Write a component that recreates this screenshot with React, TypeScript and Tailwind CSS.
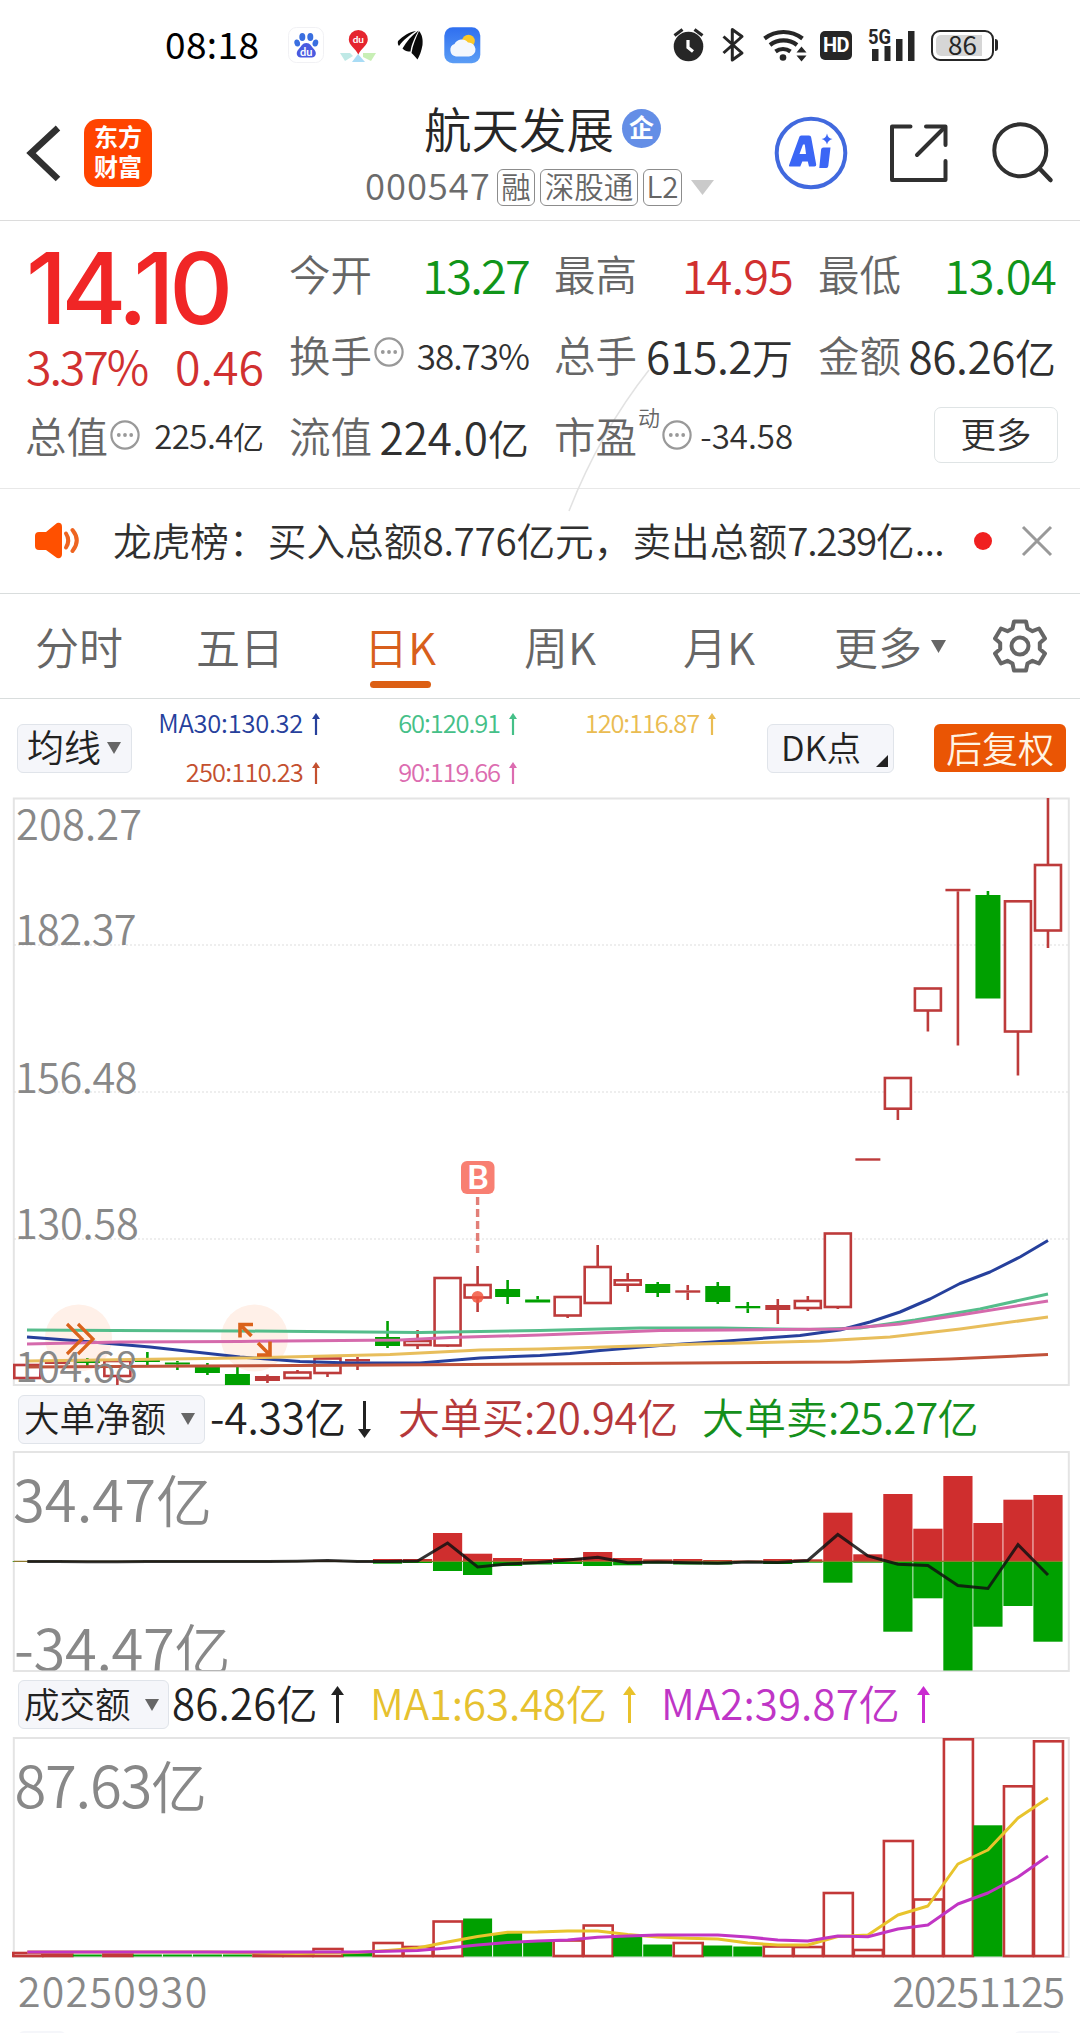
import React from "react";

const px = (i: number) => 27.3 + 30.02 * i;

const RED = "#bd3b3b";
const GREEN = "#00a000";

type Candle = { k: "h" | "r" | "g"; t: number; b: number; hi?: number; lo?: number };

const candles: Candle[] = [
  { k: "h", t: 1365, b: 1378 },
  { k: "r", t: 1361, b: 1364 },
  { k: "g", t: 1361, b: 1363, hi: 1358, lo: 1366 },
  { k: "h", t: 1361, b: 1376, lo: 1385 },
  { k: "g", t: 1360, b: 1362, hi: 1352, lo: 1365 },
  { k: "g", t: 1362.5, b: 1364.5, hi: 1361, lo: 1370 },
  { k: "g", t: 1365, b: 1373, hi: 1363, lo: 1375 },
  { k: "g", t: 1374, b: 1385, hi: 1366 },
  { k: "r", t: 1376, b: 1381, hi: 1374.5, lo: 1383 },
  { k: "h", t: 1372.5, b: 1378, hi: 1370 },
  { k: "h", t: 1358.5, b: 1373, lo: 1377 },
  { k: "r", t: 1359, b: 1361.5, hi: 1357, lo: 1370 },
  { k: "g", t: 1337, b: 1346, hi: 1321, lo: 1348 },
  { k: "h", t: 1341, b: 1345, hi: 1330, lo: 1349 },
  { k: "h", t: 1278, b: 1345.5, lo: 1347 },
  { k: "h", t: 1285, b: 1297.5, hi: 1266, lo: 1312 },
  { k: "g", t: 1289, b: 1297, hi: 1280, lo: 1304 },
  { k: "g", t: 1299.5, b: 1302.5, hi: 1296 },
  { k: "h", t: 1297, b: 1315.5, lo: 1318 },
  { k: "h", t: 1267, b: 1303, hi: 1245 },
  { k: "h", t: 1280.3, b: 1284.7, hi: 1273, lo: 1292 },
  { k: "g", t: 1284, b: 1293, hi: 1282, lo: 1297 },
  { k: "r", t: 1290.3, b: 1292.7, hi: 1285, lo: 1300 },
  { k: "g", t: 1286, b: 1302, hi: 1282, lo: 1304 },
  { k: "g", t: 1306, b: 1308.3, hi: 1302, lo: 1313 },
  { k: "r", t: 1305, b: 1310, hi: 1299, lo: 1324 },
  { k: "h", t: 1301, b: 1308, hi: 1296, lo: 1311 },
  { k: "h", t: 1233.5, b: 1307, lo: 1309 },
  { k: "r", t: 1158.3, b: 1160.7 },
  { k: "h", t: 1078, b: 1108.7, lo: 1120 },
  { k: "h", t: 988.5, b: 1010.5, lo: 1031.5 },
  { k: "r", t: 888.8, b: 891.3, lo: 1045.5 },
  { k: "g", t: 895, b: 998.5, hi: 891 },
  { k: "h", t: 901.3, b: 1031.5, lo: 1075.5 },
  { k: "h", t: 865, b: 930.5, hi: 798, lo: 948 },
];

const flows: [number, number][] = [
  [1561, 1562], [1561, 1562], [1561, 1562], [1561, 1562], [1561, 1562], [1561, 1562],
  [1561, 1562], [1561, 1562], [1561, 1562], [1561, 1562], [1560.5, 1562], [1561, 1562],
  [1559, 1563.7], [1559, 1563], [1533, 1571], [1553.7, 1575], [1558, 1566], [1559, 1564.5],
  [1558, 1564], [1552, 1566], [1558, 1565.3], [1559.3, 1563.5], [1559, 1564.5], [1560, 1564.5],
  [1560.5, 1562.7], [1559, 1564], [1559.3, 1562.7], [1512.7, 1582.7], [1554.3, 1562.7],
  [1494, 1631.7], [1528.7, 1598.3], [1476, 1670.5], [1523, 1626.7], [1499.7, 1606], [1495, 1641.7],
];

const flowLine = [
  1561.4, 1561.4, 1561.7, 1561.7, 1561.5, 1561.5, 1561.5, 1561.5, 1561.5, 1561.2, 1560.5, 1561.5,
  1561.5, 1561, 1543, 1567, 1564, 1562.5, 1560, 1557.3, 1562.7, 1562, 1562.7, 1563.2, 1562, 1562.5,
  1560.5, 1534.5, 1556, 1564.3, 1565.5, 1585.5, 1588.5, 1544.7, 1575,
];

const volumes: ["h" | "g", number][] = [
  ["h", 1953], ["h", 1954], ["g", 1954.5], ["h", 1954], ["g", 1954.5], ["g", 1954.5], ["g", 1954.5],
  ["g", 1954.5], ["h", 1955], ["h", 1955], ["h", 1949], ["g", 1953], ["h", 1943], ["h", 1947],
  ["h", 1921.5], ["g", 1918.5], ["g", 1933], ["g", 1942], ["h", 1940.5], ["h", 1925.5], ["g", 1937],
  ["g", 1944.5], ["h", 1943], ["g", 1945.5], ["g", 1946.5], ["h", 1946.5], ["h", 1947], ["h", 1893],
  ["h", 1950], ["h", 1841], ["h", 1899.5], ["h", 1739.3], ["g", 1825.3], ["h", 1786.3], ["h", 1741.3],
];

const volMa1 = [
  1952, 1952, 1952, 1952, 1952, 1952, 1952, 1952.5, 1953, 1953.5, 1953, 1952.5, 1950.5, 1948, 1942,
  1936.5, 1932.3, 1932, 1931, 1931, 1934.5, 1937, 1938.3, 1939, 1943, 1945, 1945, 1936.5, 1935, 1915,
  1906, 1864, 1850, 1818, 1798,
];
const volMa2 = [
  1952, 1952, 1952, 1952, 1952, 1952, 1952, 1952, 1952, 1952, 1952, 1952, 1951.3, 1950.5, 1948, 1945,
  1942.5, 1941, 1940, 1937.3, 1936, 1935, 1935, 1935, 1937, 1940, 1941, 1936, 1936.7, 1929, 1925, 1904,
  1893, 1877, 1856,
];

const maLines: { color: string; pts: string }[] = [
  { color: "#55bd8b", pts: "27,1330 115,1330.5 240,1331 420,1332.5 540,1330.5 640,1328 720,1328 810,1329.5 860,1328 915,1320 980,1309 1048,1294" },
  { color: "#26409c", pts: "27,1337 80,1341 150,1347 240,1357 300,1361.5 350,1363 420,1363 480,1358 540,1355.5 570,1353.5 600,1350.5 660,1345.5 720,1341.5 800,1335.5 840,1330 870,1322 900,1312 930,1299 960,1283.5 990,1272 1020,1257 1048,1240.5" },
  { color: "#d56aac", pts: "27,1344 120,1342 240,1341.5 400,1340 450,1337.5 540,1335 660,1330.5 780,1329.5 840,1329 900,1324 960,1315 1048,1301" },
  { color: "#e8be5c", pts: "27,1361 240,1358 390,1354.5 480,1350 540,1349 700,1344 820,1341 890,1337 960,1329 1048,1317" },
  { color: "#c0523a", pts: "27,1367 200,1366 540,1364 850,1362 950,1359 1048,1354.5" },
];

const toPts = (ys: number[]) => ys.map((y, i) => `${px(i).toFixed(1)},${y}`).join(" ");

/* ---------- small glyphs ---------- */

const Dots = () => (
  <svg className="shrink-0" width="30" height="30" viewBox="0 0 30 30">
    <circle cx="15" cy="15" r="13.6" fill="none" stroke="#999" strokeWidth="2.2" />
    <circle cx="8.8" cy="15" r="1.9" fill="#999" />
    <circle cx="15" cy="15" r="1.9" fill="#999" />
    <circle cx="21.2" cy="15" r="1.9" fill="#999" />
  </svg>
);

const Down = ({ w = 14, h = 12, c = "#666" }: { w?: number; h?: number; c?: string }) => (
  <svg className="shrink-0" width={w} height={h} viewBox="0 0 14 12" preserveAspectRatio="none">
    <path d="M0 0H14L7 12Z" fill={c} />
  </svg>
);

const SmallArrow = ({ c }: { c: string }) => (
  <svg className="shrink-0" width="8" height="22" viewBox="0 0 8 22">
    <path d="M4 22V2" stroke={c} strokeWidth="2.2" />
    <path d="M0 6L4 0L8 6Z" fill={c} />
  </svg>
);

const BigArrow = ({ c, down = false }: { c: string; down?: boolean }) => (
  <svg className={down ? "shrink-0 rotate-180" : "shrink-0"} width="13" height="37" viewBox="0 0 13 37">
    <path d="M6.5 37V4" stroke={c} strokeWidth="3" />
    <path d="M0 9L6.5 0L13 9Z" fill={c} />
  </svg>
);

/* ---------- status bar ---------- */

const StatusBar = () => (
  <div className="flex h-[90px] items-center pl-[165px]">
    <span className="w-[123px] pb-[4px] text-[37px] leading-none font-normal tracking-[0.400px] text-black">08:18</span>
    <svg width="36" height="36" viewBox="288 27 36 36">
      <rect x="288.5" y="27.5" width="35" height="35" rx="8" fill="#fff" stroke="#f1f1f4" />
      <g fill="#3a6fe0">
        <ellipse cx="302.3" cy="37" rx="3" ry="3.9" />
        <ellipse cx="310.3" cy="37" rx="3" ry="3.9" />
        <ellipse cx="297.2" cy="43" rx="2.8" ry="3.6" transform="rotate(-15 297.2 43)" />
        <ellipse cx="315.4" cy="43" rx="2.8" ry="3.6" transform="rotate(15 315.4 43)" />
      </g>
      <path d="M306.3 43c4 0 5 3.500 7.500 6 4 4 1.500 9-2.500 8.500h-10c-4 .5-6.500-4.500-2.500-8.500 2.500-2.500 3.500-6 7.500-6z" fill="#4a5be0" />
      <text x="306.3" y="56" textAnchor="middle" fontSize="11" fontWeight="700" fill="#fff" fontFamily="Lato">du</text>
    </svg>
    <svg className="ml-[16px]" width="36" height="36" viewBox="340 28 36 36">
      <path d="M340 54h10l3 3-8 5z" fill="#bfe9e6" />
      <path d="M352 63l6-8 7 8z" fill="#a9dcf5" />
      <path d="M363 54h13l-5 8-8-4z" fill="#c8efb5" />
      <path d="M358.300 31a9.500 9.500 0 0 1 9.500 9.600c0 6-7 9-9.500 15-2.500-6-9.500-9-9.500-15a9.500 9.500 0 0 1 9.500-9.600z" fill="#e5252f" />
      <text x="358.300" y="44" textAnchor="middle" fontSize="10" fontWeight="700" fill="#fff" fontFamily="Lato">du</text>
    </svg>
    <svg className="ml-[21px]" width="27" height="32" viewBox="397 29 27 32">
      <path d="M398 41c5-5 11-9 18-10-6 4-12 8-17 15-1-1-1.500-3-1-5z" fill="#0a0a0a" />
      <path d="M402.500 48.500c4-7 9-13 16-18-3.500 7-7 13-8 21-3 0-6-.5-8-3z" fill="#0a0a0a" />
      <path d="M411.500 53c1-8 4.500-15 7.500-22 3.500 4 4 9 3.500 14-1 6-3 11-5 14.500-1.500-2-4-4.500-6-6.500z" fill="#0a0a0a" />
    </svg>
    <svg className="ml-[20px]" width="37" height="37" viewBox="444 26.500 37 37">
      <defs>
        <linearGradient id="sky" x1="0" y1="0" x2="0" y2="1">
          <stop offset="0" stopColor="#2f6ff0" />
          <stop offset="1" stopColor="#5b9df5" />
        </linearGradient>
      </defs>
      <rect x="444.300" y="26.800" width="36" height="36" rx="8.500" fill="url(#sky)" />
      <circle cx="468.500" cy="40.500" r="6.300" fill="#fcc829" />
      <path d="M456 56a6.500 6.500 0 0 1-1.500-12.500 8 8 0 0 1 13.500-1.500 7 7 0 0 1 1 14z" fill="#f4f7fd" />
    </svg>
    <svg className="ml-[191px]" width="34" height="36" viewBox="672 27 34 36">
      <circle cx="688.500" cy="46.500" r="14.800" fill="#262626" />
      <path d="M674.500 35.500l8-6M702.500 35.500l-8-6" stroke="#262626" strokeWidth="3.200" />
      <path d="M688 40v7.500l5 4" stroke="#fff" strokeWidth="3.200" fill="none" />
    </svg>
    <svg className="ml-[15px]" width="24" height="36" viewBox="721 27 24 36">
      <path d="M723.500 36.500L742 53l-9.700 7V29.500l9.700 7L723.500 53" fill="none" stroke="#262626" strokeWidth="3" strokeLinejoin="round" />
    </svg>
    <svg className="ml-[17px]" width="46" height="36" viewBox="762 26 46 36">
      <g fill="none" stroke="#262626" strokeWidth="4.200">
        <path d="M764.500 37.500a31 31 0 0 1 38 0" />
        <path d="M770 44a22 22 0 0 1 27 0" />
        <path d="M775.500 50.500a13 13 0 0 1 15 0" />
      </g>
      <circle cx="783" cy="56.500" r="3.300" fill="#262626" />
      <path d="M796.500 51.500l5-6 5 6zM796.500 54.500l5 6 5-6z" fill="#262626" />
    </svg>
    <span className="ml-[12px] flex h-[29px] w-[32px] items-center justify-center rounded-[5px] bg-[#262626] font-[Roboto] text-[20px] leading-none font-bold tracking-tight text-white">HD</span>
    <svg className="ml-[15px]" width="48" height="36" viewBox="867 26 48 36">
      <text x="868" y="43" fontSize="20" fontWeight="700" fill="#262626" fontFamily="Roboto" textLength="23" lengthAdjust="spacingAndGlyphs">5G</text>
      <path d="M872 48h6.500v12h-6.500zM884.500 45h6v15h-6zM896 38h6.500v22h-6.500zM908 30h6.500v30h-6.500z" fill="#262626" />
    </svg>
    <div className="relative ml-[16px] flex h-[31px] w-[63px] rounded-[9px] border-2 border-[#262626] p-[3px]">
      <div className="h-full w-[46px] rounded-l-[5px] bg-[#d6d6d6]" />
      <span className="absolute inset-0 flex items-center justify-center pb-[3px] text-[26px] leading-none font-normal text-[#262626]">86</span>
    </div>
    <div className="ml-[1px] h-[12px] w-[3px] rounded-r bg-[#262626]" />
  </div>
);

/* ---------- header ---------- */

const Tag = ({ children, w }: { children: React.ReactNode; w: string }) => (
  <span className={`${w} flex h-[37px] items-center justify-center rounded-[6px] border-[1.5px] border-[#8c8c8c] pb-[2px] text-[29.5px] leading-none whitespace-nowrap text-[#666]`}>
    {children}
  </span>
);

const Header = () => (
  <header className="flex h-[131px] border-b border-[#dcdcdc] pl-[26px]">
    <svg className="mt-[32px]" width="38" height="62" viewBox="26 122 38 62">
      <path d="M58 128L31 153L58 179" fill="none" stroke="#303030" strokeWidth="6.500" />
    </svg>
    <div className="mt-[29px] ml-[20px] flex h-[68px] w-[68px] flex-col items-center justify-center gap-[4px] rounded-[14px] bg-[#ff4400] pb-[4px] text-[24px] leading-[26px] font-bold text-white">
      <span>东方</span>
      <span>财富</span>
    </div>
    <div className="ml-[213px] w-[350px]">
      <div className="flex h-[76px] items-center pl-[59px]">
        <span className="text-[47.500px] leading-none text-[#262626]">航天发展</span>
        <span className="ml-[8px] flex size-[39px] items-center justify-center rounded-full bg-[#648ee6] pb-[3px] text-[25px] leading-none font-bold text-white">企</span>
      </div>
      <div className="flex h-[42px] items-center">
        <span className="w-[132px] pb-[3px] text-[36.500px] leading-none tracking-[0.900px] text-[#6b6b6b]">000547</span>
        <div className="flex gap-[5px]">
          <Tag w="w-[38px]">融</Tag>
          <Tag w="w-[98px]">深股通</Tag>
          <Tag w="w-[39px]">L2</Tag>
        </div>
        <div className="pl-[9px]">
          <Down w={23} h={15} c="#cacaca" />
        </div>
      </div>
    </div>
    <svg className="mt-[25px] ml-[58px]" width="76" height="76" viewBox="772 115 76 76">
      <circle cx="810" cy="153" r="34.300" fill="#fff" stroke="#4169de" strokeWidth="4" />
      <path fillRule="evenodd" d="M798.500 136.500q.8-1 2-1h7.500q2 0 2.200 2l5 27q.2 2-1.700 2h-5.500l-1.200-5h-5.500l-2 5h-10q-2 0-1-2zM802 144.500l-3.500 9.500h6.500l-1.200-9.500z" fill="#3b66f5" />
      <path d="M822.500 147.500h7l-2.200 18.500q-.2 2-2 2h-7l1.800-18.500q.3-2 2.400-2z" fill="#3b66f5" />
      <path d="M826 133.500q1 5 5.500 5.500-4.500 1-5.500 5.500-1-4.500-5.500-5.500 4.500-.5 5.500-5.500z" fill="#3b66f5" />
    </svg>
    <svg className="mt-[30px] ml-[36px]" width="66" height="66" viewBox="885 120 66 66">
      <g fill="none" stroke="#303030" strokeWidth="4" strokeLinecap="round" strokeLinejoin="round">
        <path d="M910.500 126.500H892V180h53.500v-19" />
        <path d="M926 126.500h19.500V145" />
        <path d="M944 128L917 155" />
      </g>
    </svg>
    <svg className="mt-[28px] ml-[38px]" width="68" height="68" viewBox="989 118 68 68">
      <circle cx="1020.300" cy="150.300" r="26" fill="none" stroke="#303030" strokeWidth="4" />
      <path d="M1040 169l10.500 11" stroke="#303030" strokeWidth="4.500" strokeLinecap="round" />
    </svg>
  </header>
);

/* ---------- quote ---------- */

const Label = ({ children }: { children: React.ReactNode }) => (
  <span className="-ml-px text-[41.500px] leading-none whitespace-nowrap text-[#666]">{children}</span>
);

const Big = ({ n, u, track }: { n: string; u: string; track: string }) => (
  <span className={`${track} text-[44px] leading-none whitespace-nowrap text-[#303030]`}>
    {n}
    <span className="text-[41px] tracking-normal">{u}</span>
  </span>
);

const Quote = () => (
  <section className="relative h-[268px] border-b border-[#e8e8e8]">
    <svg className="absolute top-0 left-0" width="1080" height="300" viewBox="0 221 1080 300">
      <path d="M649 370Q600 432 569 511" fill="none" stroke="#e2e2e2" strokeWidth="1.500" />
    </svg>
    <div className="relative grid grid-cols-[238px_239px_238px_237px] grid-rows-[81px_81px_81px] gap-x-[26px] pt-[12px] pl-[26px]">
      <div className="row-span-2 flex flex-col">
        <span className="h-[108px] pt-[6px] font-[Inter] text-[99px] leading-none font-medium tracking-[-5.500px] text-[#f02626]">14.10</span>
        <div className="flex justify-between pt-[1px] text-[46.500px] leading-none text-[#d13030]">
          <span className="tracking-[-2.100px]">3.37%</span>
          <span>0.46</span>
        </div>
      </div>
      <div className="flex items-center justify-between">
        <Label>今开</Label>
        <span className="text-[47px] leading-none tracking-[-1.800px]  text-[#10951a]">13.27</span>
      </div>
      <div className="flex items-center justify-between">
        <Label>最高</Label>
        <span className="text-[47px] leading-none tracking-[-0.900px] text-[#d13030]">14.95</span>
      </div>
      <div className="flex items-center justify-between">
        <Label>最低</Label>
        <span className="text-[47px] leading-none tracking-[-0.700px] text-[#10951a]">13.04</span>
      </div>
      <div className="flex items-center">
        <Label>换手</Label>
        <div className="ml-[2px] pb-[5px]"><Dots /></div>
        <span className="ml-auto text-[35px] leading-none tracking-[-1px] text-[#303030]">38.73%</span>
      </div>
      <div className="flex items-center justify-between">
        <Label>总手</Label>
        <Big n="615.2" u="万" track="tracking-[-0.500px]" />
      </div>
      <div className="flex items-center justify-between">
        <Label>金额</Label>
        <Big n="86.26" u="亿" track="tracking-[-0.400px]" />
      </div>
      <div className="flex items-center">
        <Label>总值</Label>
        <div className="ml-[2px] pb-[2px]"><Dots /></div>
        <span className="ml-auto text-[33px] leading-none tracking-[-0.500px] whitespace-nowrap text-[#303030]">225.4<span className="text-[31px] tracking-normal">亿</span></span>
      </div>
      <div className="flex items-center justify-between">
        <Label>流值</Label>
        <Big n="224.0" u="亿" track="tracking-normal" />
      </div>
      <div className="flex items-center">
        <Label>市盈</Label>
        <span className="-mt-[40px] ml-px text-[22px] leading-none text-[#666]">动</span>
        <div className="ml-[2px] pb-[2px]"><Dots /></div>
        <span className="ml-auto text-[33px] leading-none text-[#303030]">-34.58</span>
      </div>
      <div className="flex items-center justify-end">
        <button className="-mr-[2px] mb-[2px] flex h-[56px] w-[124px] items-center justify-center rounded-[7px] border border-[#dfe4e5] pb-[3px] text-[35.500px] leading-none text-[#303030]">更多</button>
      </div>
    </div>
  </section>
);

const Notice = () => (
  <section className="flex h-[105px] items-center border-b border-[#d9dddd] pl-[33px]">
    <svg width="50" height="42" viewBox="33 520 50 42">
      <path d="M39 532h7l11-9q5-1 5 4v27q0 5-5 4l-11-8h-7q-4 0-4-4v-10q0-4 4-4z" fill="#ff5000" />
      <g fill="none" stroke="#ee6420" strokeWidth="4" strokeLinecap="round">
        <path d="M66 533.500q4.500 7 0 14" />
        <path d="M72.500 530q8.500 10.500 0 21" />
      </g>
    </svg>
    <p className="ml-[30px] w-[840px] pb-[4px] text-[38.700px] leading-none whitespace-nowrap text-[#303030]">
      龙虎榜：买入总额<span className="tracking-[-0.300px]">8.776</span>亿元，卖出总额<span className="tracking-[-1.300px]">7.239</span>亿<span className="tracking-[-0.700px]">...</span>
    </p>
    <span className="ml-[21px] size-[18px] rounded-full bg-[#f02020]" />
    <svg className="ml-[29px]" width="32" height="32" viewBox="0 0 32 32">
      <path d="M2 2L30 30M30 2L2 30" stroke="#999" strokeWidth="3" />
    </svg>
  </section>
);

/* ---------- tabs ---------- */

const Tabs = () => (
  <nav className="flex h-[105px] items-center border-b border-[#d9dddd] pl-[35px] text-[44px] leading-none whitespace-nowrap text-[#666]">
    <span className="w-[161px]">分时</span>
    <span className="w-[168px]">五日</span>
    <span className="relative w-[160px] text-[#d85f1c]">
      日K
      <span className="absolute top-[57px] left-[6px] h-[7px] w-[61px] rounded-full bg-[#dc5f14]" />
    </span>
    <span className="w-[159px]">周K</span>
    <span className="w-[151px]">月K</span>
    <span className="w-[97px]">更多</span>
    <Down w={15} h={13} />
    <svg className="ml-[46px]" width="56" height="56" viewBox="-28 -28 56 56">
      <path d="M-6 -24.500H6L7.500 -17.500L12.500 -14.800L19 -17.500L25 -7.500L19.800 -3V3L25 7.500L19 17.500L12.500 14.800L7.500 17.500L6 24.500H-6L-7.500 17.500L-12.500 14.800L-19 17.500L-25 7.500L-19.800 3V-3L-25 -7.500L-19 -17.500L-12.500 -14.800L-7.500 -17.500Z" fill="none" stroke="#666" strokeWidth="4" strokeLinejoin="round" />
      <circle r="8.500" fill="none" stroke="#666" strokeWidth="4" />
    </svg>
  </nav>
);

/* ---------- moving averages ---------- */

const Ma = ({ t, c, track }: { t: string; c: string; track: string }) => (
  <div className="flex items-center justify-end gap-[9px]" style={{ color: c }}>
    <span className={`${track} pb-[3px] text-[25.500px] leading-none whitespace-nowrap`}>{t}</span>
    <SmallArrow c={c} />
  </div>
);

const MaBar = () => (
  <section className="flex h-[98px] items-center pl-[17px]">
    <button className="flex h-[49px] w-[115px] items-center rounded-[6px] border border-[#e0e4ea] bg-[#f5f6fa] pl-[9px] text-[37px] leading-none text-[#222]">
      <span className="pb-[3px]">均线</span>
      <span className="ml-[6px]"><Down w={14} h={12} /></span>
    </button>
    <div className="ml-[15px] grid grid-cols-[173px_197px_199px] grid-rows-[49px_49px]">
      <Ma t="MA30:130.32" c="#26409c" track="tracking-[-0.250px]" />
      <Ma t="60:120.91" c="#45c088" track="tracking-[-1.100px]" />
      <Ma t="120:116.87" c="#eabc52" track="tracking-[-1.150px]" />
      <Ma t="250:110.23" c="#c4502f" track="tracking-[-0.850px]" />
      <Ma t="90:119.66" c="#dc6cb0" track="tracking-[-1.100px]" />
    </div>
    <button className="relative ml-[51px] flex h-[49px] w-[127px] items-center rounded-[6px] border border-[#e0e4ea] bg-[#f5f6fa] pb-[3px] pl-[13px] text-[34.500px] leading-none text-[#222]">
      DK点
      <svg className="absolute right-[5px] bottom-[5px]" width="12" height="12" viewBox="0 0 12 12">
        <path d="M12 0V12H0Z" fill="#222" />
      </svg>
    </button>
    <button className="ml-[40px] flex h-[48px] w-[132px] items-center justify-center rounded-[6px] bg-[#ea5504] pb-[3px] text-[36px] leading-none text-[#fff4e4]">后复权</button>
  </section>
);

/* ---------- charts ---------- */

const AXIS = "#888";
const frame = { fill: "none", stroke: "#e4e4e4", strokeWidth: 2 };

const KChart = () => (
  <svg className="block" width="1080" height="589" viewBox="0 797 1080 589">
    <rect x="13.800" y="798.500" width="1055" height="586.500" {...frame} />
    {[945, 1092, 1239].map((y) => (
      <line key={y} x1="14" x2="1069" y1={y} y2={y} stroke="#dedede" strokeWidth="1.200" strokeDasharray="2 2" />
    ))}
    <circle cx="78.500" cy="1338" r="33.500" fill="#fff0e8" />
    <circle cx="254.500" cy="1338" r="33.500" fill="#fff0e8" />
    {candles.map((c, i) => {
      const x = px(i);
      const col = c.k === "g" ? GREEN : RED;
      return (
        <g key={i} stroke={col} strokeWidth="2.600">
          {c.hi !== undefined && <line x1={x} x2={x} y1={c.hi} y2={c.t} />}
          {c.lo !== undefined && <line x1={x} x2={x} y1={c.b} y2={c.lo} />}
          {c.k === "h" ? (
            <rect x={x - 13} y={c.t} width="26" height={c.b - c.t} fill="#fff" />
          ) : (
            <rect x={x - 12.500} y={c.t} width="25" height={c.b - c.t} fill={col} stroke="none" />
          )}
        </g>
      );
    })}
    {maLines.map((l) => (
      <polyline key={l.color} points={l.pts} fill="none" stroke={l.color} strokeWidth="3" strokeLinejoin="round" />
    ))}
    <circle cx="477.600" cy="1297" r="6" fill="#f2563f" fillOpacity="0.850" />
    <line x1="477.600" x2="477.600" y1="1197" y2="1254" stroke="#e27f78" strokeWidth="3.400" strokeDasharray="8 4" />
    <rect x="461" y="1161" width="33.500" height="33" rx="6" fill="#f87f72" />
    <text x="477.800" y="1189" textAnchor="middle" fontSize="33" fontWeight="700" fill="#fff" fontFamily="Lato">B</text>
    <g fill="none" stroke="#da621b" strokeWidth="3.200">
      <path d="M67 1324L82 1339L67 1354M78 1324L93 1339L78 1354" />
      <path d="M253 1324.500H240V1337.500M240.500 1325L251.500 1336M257 1355H270V1341.500M269.500 1354.500L258 1343" strokeWidth="3.600" />
    </g>
    <g fill={AXIS} fontSize="41.500">
      <text x="16" y="839.500" letterSpacing="0.200">208.27</text>
      <text x="15" y="945" letterSpacing="-0.700">182.37</text>
      <text x="15" y="1092.500" letterSpacing="-0.500">156.48</text>
      <text x="15" y="1239" letterSpacing="-0.250">130.58</text>
      <text x="15" y="1382" letterSpacing="-0.500">104.68</text>
    </g>
  </svg>
);

const FlowChart = () => (
  <svg className="block" width="1080" height="221" viewBox="0 1451 1080 221">
    <rect x="13.800" y="1452" width="1055" height="219" {...frame} />
    <g fill={AXIS} fontSize="58">
      <text x="13" y="1522">34.47<tspan fontSize="56">亿</tspan></text>
      <svg x="0" y="1600" width="400" height="70.500" viewBox="0 1600 400 70.500">
        <text x="14" y="1671" letterSpacing="-0.400">-34.47<tspan fontSize="56">亿</tspan></text>
      </svg>
    </g>
    {flows.map(([t, b], i) => (
      <g key={i}>
        <rect x={px(i) - 14.600} y={t} width="29.200" height={1561.300 - t} fill="#cf2e2e" />
        <rect x={px(i) - 14.600} y={1561.300} width="29.200" height={b - 1561.300} fill={GREEN} />
      </g>
    ))}
    <line x1="14" x2="1062" y1="1561.300" y2="1561.300" stroke="#8f7a2c" strokeWidth="1.200" />
    <polyline points={toPts(flowLine)} fill="none" stroke="#111" strokeOpacity="0.850" strokeWidth="3" />
  </svg>
);

const VolumeChart = () => (
  <svg className="block" width="1080" height="221" viewBox="0 1737 1080 221">
    <rect x="13.800" y="1738" width="1055" height="219" {...frame} />
    <g fill={AXIS} fontSize="58" letterSpacing="-1.300">
      <text x="14.500" y="1808">87.63<tspan fontSize="56">亿</tspan></text>
    </g>
    {volumes.map(([k, t], i) =>
      k === "g" ? (
        <rect key={i} x={px(i) - 14.500} y={t} width="29" height={1956.500 - t} fill={GREEN} />
      ) : (
        <rect key={i} x={px(i) - 14} y={t} width="29" height={1956 - t} fill="#fff" stroke="#c23838" strokeWidth="2.600" />
      )
    )}
    <polyline points={toPts(volMa1)} fill="none" stroke="#e8c42c" strokeWidth="3" strokeLinejoin="round" />
    <polyline points={toPts(volMa2)} fill="none" stroke="#c135c4" strokeWidth="3" strokeLinejoin="round" />
  </svg>
);

const Picker = ({ label, w }: { label: string; w: string }) => (
  <button className={`${w} flex h-[49px] shrink-0 items-center justify-between rounded-[6px] border border-[#e0e4ea] bg-[#f5f6fa] pr-[9px] pl-[5px] text-[35.500px] leading-none text-[#222]`}>
    <span className="pb-[4px]">{label}</span>
    <Down w={14} h={12} />
  </button>
);

const Val = ({ pre = "", n, c, w }: { pre?: string; n: string; c: string; w: string }) => (
  <span className={`${w} shrink-0 pb-[6px] text-[42px] leading-none whitespace-nowrap`} style={{ color: c }}>
    <span className="tracking-normal">{pre}</span>
    {n}
    <span className="text-[41px] tracking-normal">亿</span>
  </span>
);

export default function App() {
  return (
    <main className="h-[2033px] w-[1080px] overflow-hidden bg-white font-['Noto_Sans_CJK_SC',sans-serif] font-[350]">
      <StatusBar />
      <Header />
      <Quote />
      <Notice />
      <Tabs />
      <MaBar />
      <KChart />
      <div className="flex h-[65px] items-center pt-[1px] pl-[18px]">
        <Picker label="大单净额" w="w-[187px]" />
        <Val n="-4.33" c="#222" w="ml-[5px] w-[148px] tracking-normal" />
        <BigArrow c="#222" down />
        <Val pre="大单买" n=":20.94" c="#b5383a" w="ml-[27px] w-[304px] tracking-[-0.250px]" />
        <Val pre="大单卖" n=":25.27" c="#158f1c" w="tracking-[-0.900px]" />
      </div>
      <FlowChart />
      <div className="flex h-[65px] items-center pl-[18px]">
        <Picker label="成交额" w="w-[151px]" />
        <Val n="86.26" c="#222" w="ml-[3px] w-[159px] tracking-[0.200px]" />
        <BigArrow c="#222" />
        <Val n="MA1:63.48" c="#e6c12f" w="ml-[26px] w-[253px] tracking-[-0.100px]" />
        <BigArrow c="#e9c12a" />
        <Val n="MA2:39.87" c="#bf35c6" w="ml-[25px] w-[256px] tracking-[0.100px]" />
        <BigArrow c="#c92bd0" />
      </div>
      <VolumeChart />
      <footer className="flex h-[66px] items-center justify-between pr-[16px] pb-[4px] pl-[18px] text-[41px] leading-none text-[#888]">
        <span className="tracking-[1.300px]">20250930</span>
        <span className="tracking-[-1.050px]">20251125</span>
      </footer>
      <div className="flex justify-between px-[18px]">
        <div className="mt-[7px] h-[49px] w-[48px] rounded-[6px] bg-[#f5f6fa]" />
        <div className="mt-[7px] h-[49px] w-[48px] rounded-[6px] bg-[#f5f6fa]" />
      </div>
    </main>
  );
}
